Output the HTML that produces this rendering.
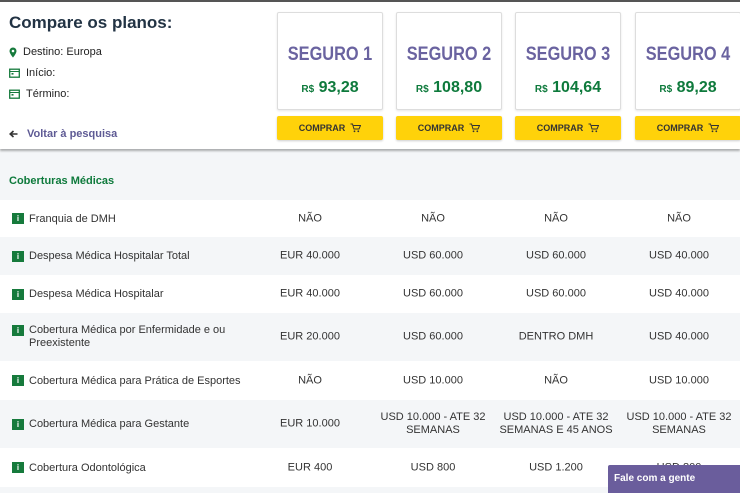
<!DOCTYPE html>
<html><head><meta charset="utf-8"><style>
*{margin:0;padding:0;box-sizing:border-box}
body{width:740px;height:493px;overflow:hidden;background:#f4f6f8;font-family:"Liberation Sans",sans-serif;position:relative;color:#333}
.top{position:absolute;left:0;top:0;width:740px;height:149px;background:#fff;border-top:2px solid #555;box-shadow:0 2px 2px rgba(0,0,0,.3)}
h1{position:absolute;left:9px;top:11px;font-size:17px;font-weight:bold;color:#223344}
.info{position:absolute;left:9px;font-size:11px;color:#222;display:flex;align-items:center;gap:6px}
.back{position:absolute;left:9px;top:126px;font-size:11px;font-weight:bold;color:#5e5a94;display:flex;align-items:center;gap:9px}
.card{position:absolute;top:10px;width:106px;height:98px;border:1px solid #ddd;border-radius:2px;background:#fff;text-align:center;box-shadow:0 1px 2px rgba(0,0,0,.1)}
.card .n{margin-top:31px;font-size:19px;font-weight:bold;color:#6a63a0;transform:scaleX(.86);white-space:nowrap}
.card .p{margin-top:13px;font-size:16px;font-weight:bold;color:#0e7a3c}
.card .p small{font-size:10px}
.btn{position:absolute;top:114px;width:106px;height:24px;background:#ffd20a;border-radius:2px;font-size:9px;font-weight:bold;color:#333;display:flex;align-items:center;justify-content:center;gap:5px;box-shadow:0 1px 2px rgba(0,0,0,.2)}
.row{position:absolute;left:0;width:740px;font-size:11px;color:#333}
.row .l{position:absolute;left:12px;display:flex;align-items:center;gap:5px;top:50%;transform:translateY(-50%)}
.ic{width:12px;height:11px;background:#167a3c;color:#fff;font-size:8px;font-weight:bold;text-align:center;line-height:11px}
.v{position:absolute;width:120px;text-align:center;top:50%;transform:translateY(-50%);line-height:13px}
.w{background:#fff}.g{background:#f4f6f8}
.fale{position:absolute;left:608px;top:465px;width:132px;height:28px;background:#6a5d9c;color:#fff;font-size:10px;font-weight:bold;padding:8px 6px;border-radius:2px 0 0 0}
</style></head><body>
<div class="top">
<h1>Compare os planos:</h1>
<div class="info" style="top:44px"><svg width="8" height="11" viewBox="0 0 8 11"><path d="M4 0.5a3.5 3.5 0 0 0-3.5 3.5c0 2.5 3.5 6.5 3.5 6.5s3.5-4 3.5-6.5A3.5 3.5 0 0 0 4 .5z" fill="#167a3c"/><circle cx="4" cy="4" r="1.3" fill="#fff"/></svg>Destino: Europa</div>
<div class="info" style="top:65px"><svg width="11" height="10" viewBox="0 0 11 10"><rect x="0.7" y="1.2" width="9.6" height="8" fill="none" stroke="#167a3c" stroke-width="1.3"/><path d="M1 3.5h9" stroke="#167a3c"/><rect x="2.5" y="5" width="2" height="1.6" fill="#167a3c"/></svg>Início:</div>
<div class="info" style="top:86px"><svg width="11" height="10" viewBox="0 0 11 10"><rect x="0.7" y="1.2" width="9.6" height="8" fill="none" stroke="#167a3c" stroke-width="1.3"/><path d="M1 3.5h9" stroke="#167a3c"/><rect x="2.5" y="5" width="2" height="1.6" fill="#167a3c"/></svg>Término:</div>
<div class="back"><svg width="9" height="8" viewBox="0 0 9 8"><path d="M8.5 4H2M4.5 1L1.2 4l3.3 3" fill="none" stroke="#333" stroke-width="1.6"/></svg>Voltar à pesquisa</div>
<div class="card" style="left:277px"><div class="n">SEGURO 1</div><div class="p"><small>R$</small> 93,28</div></div>
<div class="card" style="left:396px"><div class="n">SEGURO 2</div><div class="p"><small>R$</small> 108,80</div></div>
<div class="card" style="left:515px"><div class="n">SEGURO 3</div><div class="p"><small>R$</small> 104,64</div></div>
<div class="card" style="left:635px"><div class="n">SEGURO 4</div><div class="p"><small>R$</small> 89,28</div></div>
<div class="btn" style="left:277px">COMPRAR <svg width="11" height="10" viewBox="0 0 11 10"><path d="M0.5 1h2l1.5 5h5l1.5-3.5H3.5" fill="none" stroke="#333"/><circle cx="4.5" cy="8.3" r=".9" fill="#333"/><circle cx="8.3" cy="8.3" r=".9" fill="#333"/></svg></div>
<div class="btn" style="left:396px">COMPRAR <svg width="11" height="10" viewBox="0 0 11 10"><path d="M0.5 1h2l1.5 5h5l1.5-3.5H3.5" fill="none" stroke="#333"/><circle cx="4.5" cy="8.3" r=".9" fill="#333"/><circle cx="8.3" cy="8.3" r=".9" fill="#333"/></svg></div>
<div class="btn" style="left:515px">COMPRAR <svg width="11" height="10" viewBox="0 0 11 10"><path d="M0.5 1h2l1.5 5h5l1.5-3.5H3.5" fill="none" stroke="#333"/><circle cx="4.5" cy="8.3" r=".9" fill="#333"/><circle cx="8.3" cy="8.3" r=".9" fill="#333"/></svg></div>
<div class="btn" style="left:635px">COMPRAR <svg width="11" height="10" viewBox="0 0 11 10"><path d="M0.5 1h2l1.5 5h5l1.5-3.5H3.5" fill="none" stroke="#333"/><circle cx="4.5" cy="8.3" r=".9" fill="#333"/><circle cx="8.3" cy="8.3" r=".9" fill="#333"/></svg></div>
</div>
<div class="row g" style="top:160px;height:42px"><div class="l" style="left:9px;font-weight:bold;color:#0e7a3c">Coberturas Médicas</div></div>
<div class="row w" style="top:200px;height:37px"><div class="l"><span class="ic">i</span>Franquia de DMH</div><div class="v" style="left:250px">NÃO</div><div class="v" style="left:373px">NÃO</div><div class="v" style="left:496px">NÃO</div><div class="v" style="left:619px">NÃO</div></div>
<div class="row g" style="top:237px;height:38px"><div class="l"><span class="ic">i</span>Despesa Médica Hospitalar Total</div><div class="v" style="left:250px">EUR 40.000</div><div class="v" style="left:373px">USD 60.000</div><div class="v" style="left:496px">USD 60.000</div><div class="v" style="left:619px">USD 40.000</div></div>
<div class="row w" style="top:275px;height:38px"><div class="l"><span class="ic">i</span>Despesa Médica Hospitalar</div><div class="v" style="left:250px">EUR 40.000</div><div class="v" style="left:373px">USD 60.000</div><div class="v" style="left:496px">USD 60.000</div><div class="v" style="left:619px">USD 40.000</div></div>
<div class="row g" style="top:313px;height:48px"><div class="l" style="align-items:flex-start"><span class="ic" style="margin-top:1px">i</span><span style="line-height:13px">Cobertura Médica por Enfermidade e ou<br>Preexistente</span></div><div class="v" style="left:250px">EUR 20.000</div><div class="v" style="left:373px">USD 60.000</div><div class="v" style="left:496px">DENTRO DMH</div><div class="v" style="left:619px">USD 40.000</div></div>
<div class="row w" style="top:361px;height:39px"><div class="l"><span class="ic">i</span>Cobertura Médica para Prática de Esportes</div><div class="v" style="left:250px">NÃO</div><div class="v" style="left:373px">USD 10.000</div><div class="v" style="left:496px">NÃO</div><div class="v" style="left:619px">USD 10.000</div></div>
<div class="row g" style="top:400px;height:48px"><div class="l"><span class="ic">i</span>Cobertura Médica para Gestante</div><div class="v" style="left:250px">EUR 10.000</div><div class="v" style="left:373px">USD 10.000 - ATE 32<br>SEMANAS</div><div class="v" style="left:496px">USD 10.000 - ATE 32<br>SEMANAS E 45 ANOS</div><div class="v" style="left:619px">USD 10.000 - ATE 32<br>SEMANAS</div></div>
<div class="row w" style="top:448px;height:39px"><div class="l"><span class="ic">i</span>Cobertura Odontológica</div><div class="v" style="left:250px">EUR 400</div><div class="v" style="left:373px">USD 800</div><div class="v" style="left:496px">USD 1.200</div><div class="v" style="left:619px">USD 800</div></div>
<div class="fale">Fale com a gente</div>
</body></html>
